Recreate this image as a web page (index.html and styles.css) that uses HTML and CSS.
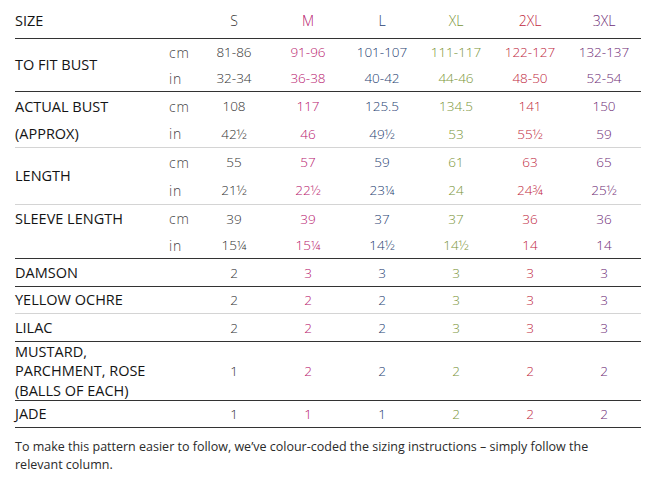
FILE: index.html
```html
<!DOCTYPE html>
<html lang="en">
<head>
<meta charset="utf-8">
<title>Size chart</title>
<link rel="stylesheet" href="styles.css">
</head>
<body>
<div class="chart">
  <div class="grp head dark">
    <div class="lbl">SIZE</div><div class="u"></div>
    <div class="v c1">S</div><div class="v c2">M</div><div class="v c3">L</div><div class="v c4">XL</div><div class="v c5">2XL</div><div class="v c6">3XL</div>
  </div>
  <div class="grp fit dark">
    <div class="lbl span">TO FIT BUST</div>
    <div class="u">cm</div>
    <div class="v c1">81-86</div><div class="v c2">91-96</div><div class="v c3">101-107</div><div class="v c4">111-117</div><div class="v c5">122-127</div><div class="v c6">132-137</div>
    <div class="u">in</div>
    <div class="v c1">32-34</div><div class="v c2">36-38</div><div class="v c3">40-42</div><div class="v c4">44-46</div><div class="v c5">48-50</div><div class="v c6">52-54</div>
  </div>
  <div class="grp actual light">
    <div class="lbl span rows">ACTUAL BUST<br>(APPROX)</div>
    <div class="u">cm</div>
    <div class="v c1">108</div><div class="v c2">117</div><div class="v c3">125.5</div><div class="v c4">134.5</div><div class="v c5">141</div><div class="v c6">150</div>
    <div class="u">in</div>
    <div class="v c1">42½</div><div class="v c2">46</div><div class="v c3">49½</div><div class="v c4">53</div><div class="v c5">55½</div><div class="v c6">59</div>
  </div>
  <div class="grp length light">
    <div class="lbl span">LENGTH</div>
    <div class="u">cm</div>
    <div class="v c1">55</div><div class="v c2">57</div><div class="v c3">59</div><div class="v c4">61</div><div class="v c5">63</div><div class="v c6">65</div>
    <div class="u">in</div>
    <div class="v c1">21½</div><div class="v c2">22½</div><div class="v c3">23¼</div><div class="v c4">24</div><div class="v c5">24¾</div><div class="v c6">25½</div>
  </div>
  <div class="grp sleeve dark">
    <div class="lbl span top">SLEEVE LENGTH</div>
    <div class="u">cm</div>
    <div class="v c1">39</div><div class="v c2">39</div><div class="v c3">37</div><div class="v c4">37</div><div class="v c5">36</div><div class="v c6">36</div>
    <div class="u">in</div>
    <div class="v c1">15¼</div><div class="v c2">15¼</div><div class="v c3">14½</div><div class="v c4">14½</div><div class="v c5">14</div><div class="v c6">14</div>
  </div>
  <div class="grp one r27 dark">
    <div class="lbl">DAMSON</div><div class="u"></div>
    <div class="v c1">2</div><div class="v c2">3</div><div class="v c3">3</div><div class="v c4">3</div><div class="v c5">3</div><div class="v c6">3</div>
  </div>
  <div class="grp one r26 light">
    <div class="lbl">YELLOW OCHRE</div><div class="u"></div>
    <div class="v c1">2</div><div class="v c2">2</div><div class="v c3">2</div><div class="v c4">3</div><div class="v c5">3</div><div class="v c6">3</div>
  </div>
  <div class="grp one r27 dark">
    <div class="lbl">LILAC</div><div class="u"></div>
    <div class="v c1">2</div><div class="v c2">2</div><div class="v c3">2</div><div class="v c4">3</div><div class="v c5">3</div><div class="v c6">3</div>
  </div>
  <div class="grp one r58 dark">
    <div class="lbl multi">MUSTARD,<br>PARCHMENT, ROSE<br>(BALLS OF EACH)</div><div class="u"></div>
    <div class="v c1">1</div><div class="v c2">2</div><div class="v c3">2</div><div class="v c4">2</div><div class="v c5">2</div><div class="v c6">2</div>
  </div>
  <div class="grp one r26 dark">
    <div class="lbl">JADE</div><div class="u"></div>
    <div class="v c1">1</div><div class="v c2">1</div><div class="v c3">1</div><div class="v c4">2</div><div class="v c5">2</div><div class="v c6">2</div>
  </div>
  <p class="note">To make this pattern easier to follow, we’ve colour-coded the sizing instructions – simply follow the relevant column.</p>
</div>
</body>
</html>
```

FILE: styles.css
```css
html, body {
  margin: 0;
  padding: 0;
  background: #ffffff;
}

body {
  font-family: "Open Sans", "Noto Sans", sans-serif;
  color: #1e1e1e;
}

.chart {
  width: 626px;
  margin-left: 15px;
}

.grp {
  display: grid;
  grid-template-columns: 152px 30px repeat(6, 74px);
  align-items: center;
}

.grp.dark { border-bottom: 1px solid #333333; }
.grp.light { border-bottom: 1px solid #d4d4d4; }

.head { grid-template-rows: 35px; padding-top: 3px; }
.fit { grid-template-rows: 26px 26px; }
.actual { grid-template-rows: 28px 27px; }
.length { grid-template-rows: 28px 28px; }
.sleeve { grid-template-rows: 27px 26px; }
.r27 { grid-template-rows: 27px; }
.r26 { grid-template-rows: 26px; }
.r58 { grid-template-rows: 58px; }

.lbl {
  grid-column: 1;
  font-size: 14.5px;
  line-height: 20px;
  font-weight: 400;
  color: #141414;
  white-space: nowrap;
}

.lbl.span { grid-row: 1 / span 2; }
.lbl.rows { line-height: 27px; }
.lbl.top { align-self: start; line-height: 27px; }
.lbl.multi { line-height: 19.5px; }

.u {
  font-size: 14px;
  font-weight: 300;
  color: #444444;
  letter-spacing: 0.8px;
  padding-left: 2px;
}

.v {
  text-align: center;
  font-size: 13.5px;
  font-weight: 300;
  line-height: 20px;
}

.head .v { font-size: 14px; }

.c1 { color: #333333; }
.c2 { color: #b8206e; }
.c3 { color: #1f4272; }
.c4 { color: #7a9538; }
.c5 { color: #c02840; }
.c6 { color: #6e2c76; }

.note {
  margin: 10px 0 0 0;
  font-size: 12.5px;
  line-height: 18px;
  color: #2a2a2a;
  width: 600px;
}
```
